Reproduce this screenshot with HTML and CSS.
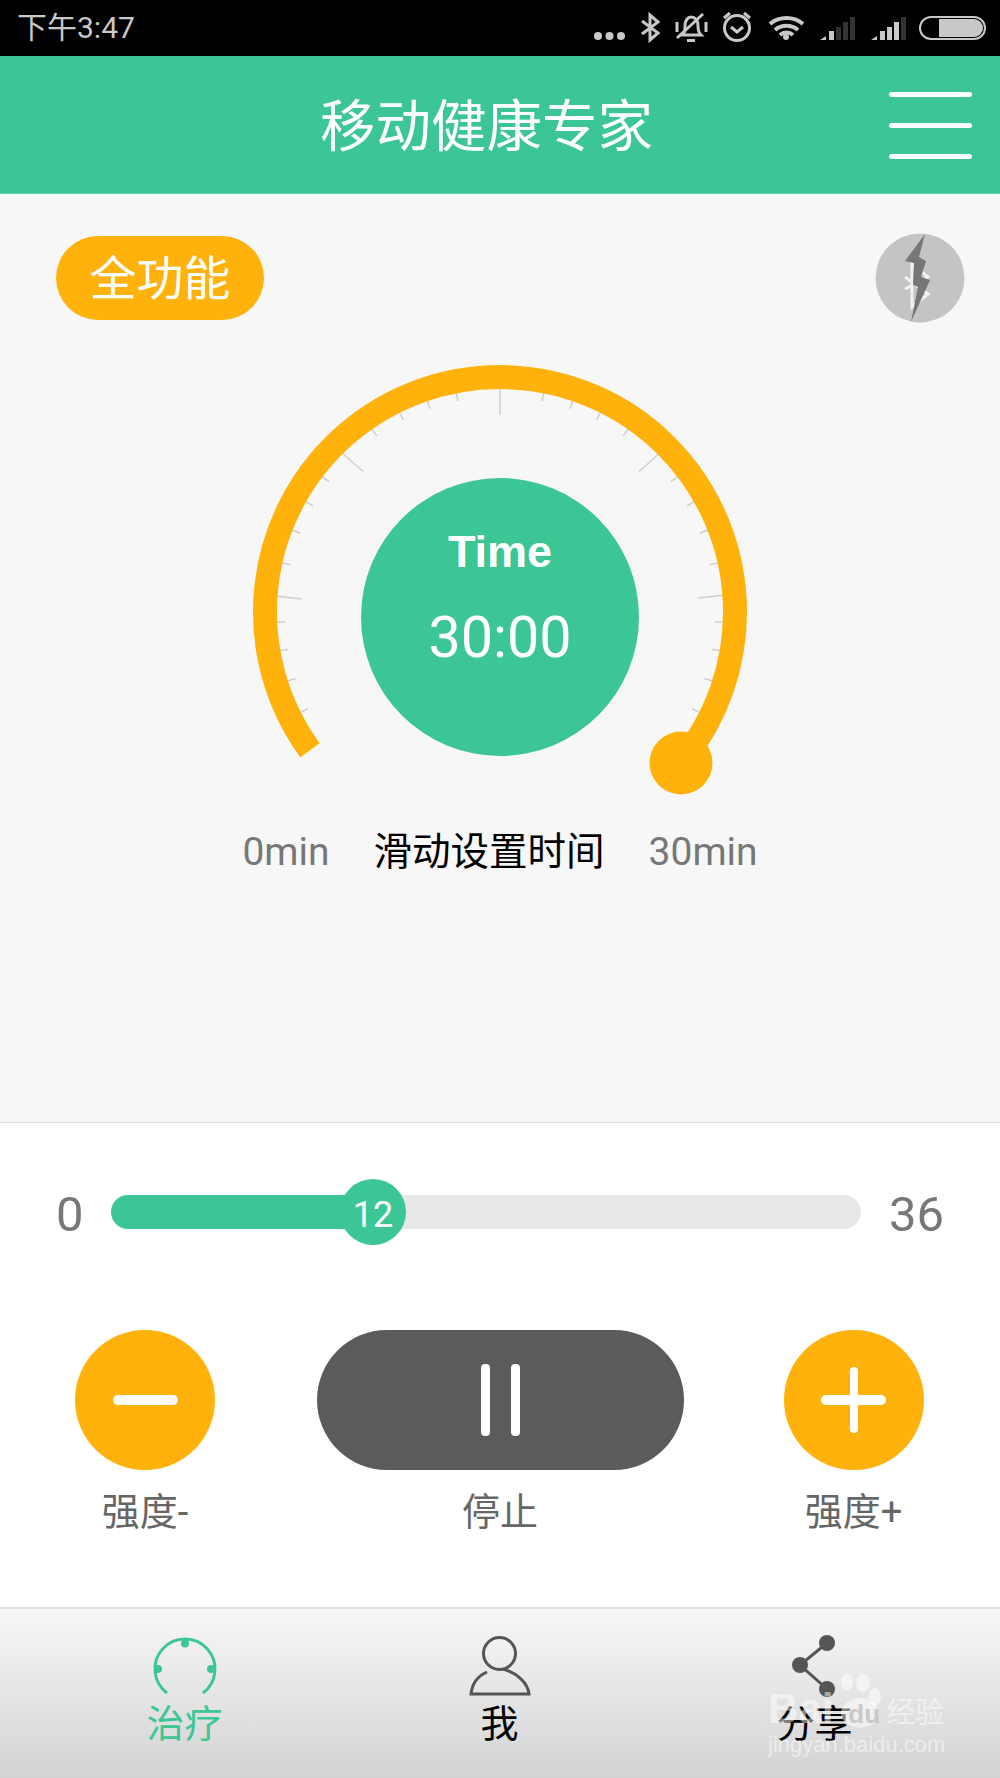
FILE: index.html
```html
<!DOCTYPE html>
<html lang="zh-CN">
<head>
    <meta charset="UTF-8">
    <meta name="viewport" content="width=device-width, initial-scale=1.0">
    <title>移动健康专家</title>
    <link rel="stylesheet" href="styles.css">
</head>
<body>
    <!-- Status bar -->
    <div class="status-bar">
        <span class="status-time">下午3:47</span>
        <svg class="status-icons" width="410" height="56" viewBox="590 0 410 56">
            <g class="si-fill">
                <circle cx="598" cy="36" r="4"/><circle cx="609.500" cy="36" r="4"/><circle cx="621" cy="36" r="4"/>
            </g>
            <polyline class="si-line" points="642,21 658,33 650,40 650,15 658,22 642,34"/>
            <g class="si-line">
                <path d="M683 35 C685 33 685 30 685 26 C685 20 688 17 691 17 C695 17 698 20 698 26 C698 30 699 33 701 35 Z"/>
                <path d="M687 40.500 H695"/>
                <path d="M677 38 L703 14"/>
                <path d="M677 22 v10 M706 22 v10"/>
            </g>
            <g class="si-line">
                <circle cx="737" cy="28" r="12.500"/>
                <path d="M731 27 L737 32 L743 27 M724 18 L730 13 M750 18 L744 13"/>
            </g>
            <g class="si-line si-wifi">
                <path d="M770 24 a26 26 0 0 1 33 0 M775 30 a18 18 0 0 1 23 0 M780 35 a10 10 0 0 1 13 0"/>
            </g>
            <circle class="si-fill" cx="786" cy="37" r="3"/>
            <g class="si-fill">
                <path d="M820 40 L826 36 V40Z"/><rect x="829" y="31" width="5" height="9"/>
                <g class="si-dim"><rect x="836" y="27" width="5" height="13"/><rect x="843" y="22" width="5" height="18"/><rect x="850" y="17" width="5" height="23"/></g>
            </g>
            <g class="si-fill">
                <path d="M871 40 L877 36 V40Z"/><rect x="880" y="31" width="5" height="9"/><rect x="887" y="27" width="5" height="13"/><rect x="894" y="22" width="5" height="18"/>
                <rect class="si-dim" x="901" y="17" width="5" height="23"/>
            </g>
            <rect class="si-line si-thin" x="920" y="17" width="65" height="22" rx="11"/>
            <path class="si-fill" d="M939 19 H974 a9 9 0 0 1 0 18 H939Z"/>
        </svg>
    </div>

    <!-- Header -->
    <header class="app-header">
        <h1>移动健康专家</h1>
        <div class="menu-icon"><span></span><span></span><span></span></div>
    </header>

    <!-- Timer area -->
    <section class="timer-area">
        <div class="top-row">
            <span class="mode-pill">全功能</span>
            <svg class="bt-badge" width="90" height="90" viewBox="0 0 90 90">
                <circle class="bt-bg" cx="45" cy="45" r="44.500"/>
                <polyline class="bt-mark" points="30,44 53,61 37,74 37,31 53,44 30,56"/>
                <polygon class="bt-bolt" points="50,1 30,28 39,30 38,52 43,54 36,89 55,47 46,44 51,28 44,24"/>
            </svg>
        </div>

        <svg class="gauge" width="540" height="450" viewBox="230 350 540 450">
            <g class="tick-minor">
                <line x1="500" y1="386" x2="500" y2="396" transform="rotate(-116.700 500 611)"/>
                <line x1="500" y1="386" x2="500" y2="396" transform="rotate(-108 500 611)"/>
                <line x1="500" y1="386" x2="500" y2="396" transform="rotate(-100 500 611)"/>
                <line x1="500" y1="386" x2="500" y2="396" transform="rotate(-92.600 500 611)"/>
                <line x1="500" y1="386" x2="500" y2="396" transform="rotate(-77.300 500 611)"/>
                <line x1="500" y1="386" x2="500" y2="396" transform="rotate(-68.500 500 611)"/>
                <line x1="500" y1="386" x2="500" y2="396" transform="rotate(-60.400 500 611)"/>
                <line x1="500" y1="386" x2="500" y2="396" transform="rotate(-52.700 500 611)"/>
                <line x1="500" y1="386" x2="500" y2="396" transform="rotate(-35 500 611)"/>
                <line x1="500" y1="386" x2="500" y2="396" transform="rotate(-26.700 500 611)"/>
                <line x1="500" y1="386" x2="500" y2="396" transform="rotate(-19 500 611)"/>
                <line x1="500" y1="386" x2="500" y2="396" transform="rotate(-11.300 500 611)"/>
                <line x1="500" y1="386" x2="500" y2="396" transform="rotate(11.300 500 611)"/>
                <line x1="500" y1="386" x2="500" y2="396" transform="rotate(19 500 611)"/>
                <line x1="500" y1="386" x2="500" y2="396" transform="rotate(26.700 500 611)"/>
                <line x1="500" y1="386" x2="500" y2="396" transform="rotate(35 500 611)"/>
                <line x1="500" y1="386" x2="500" y2="396" transform="rotate(52.700 500 611)"/>
                <line x1="500" y1="386" x2="500" y2="396" transform="rotate(60.400 500 611)"/>
                <line x1="500" y1="386" x2="500" y2="396" transform="rotate(68.500 500 611)"/>
                <line x1="500" y1="386" x2="500" y2="396" transform="rotate(77.300 500 611)"/>
                <line x1="500" y1="386" x2="500" y2="396" transform="rotate(92.600 500 611)"/>
                <line x1="500" y1="386" x2="500" y2="396" transform="rotate(100 500 611)"/>
                <line x1="500" y1="386" x2="500" y2="396" transform="rotate(108 500 611)"/>
                <line x1="500" y1="386" x2="500" y2="396" transform="rotate(116.700 500 611)"/>
            </g>
            <g class="tick-major">
                <line x1="274" y1="595" x2="302" y2="598"/>
                <line x1="340" y1="450" x2="363" y2="470.500"/>
                <line x1="500" y1="386" x2="500" y2="414"/>
                <line x1="662" y1="450" x2="639" y2="470.500"/>
                <line x1="726" y1="594" x2="698" y2="597"/>
            </g>
            <path class="gauge-arc" d="M310 749.300 A235 235 0 1 1 680.500 761.500"/>
            <circle class="gauge-knob" cx="681" cy="762" r="31.500"/>
            <circle class="gauge-face" cx="500" cy="616" r="139"/>
            <text class="gauge-title" x="500" y="566">Time</text>
            <text class="gauge-value" x="500" y="656">30:00</text>
        </svg>

        <div class="gauge-labels">
            <span class="range-label">0min</span>
            <span class="gauge-hint">滑动设置时间</span>
            <span class="range-label">30min</span>
        </div>
    </section>

    <!-- Intensity controls -->
    <section class="control-area">
        <div class="slider-row">
            <span class="slider-min">0</span>
            <div class="slider-track">
                <div class="slider-fill"></div>
                <div class="slider-thumb">12</div>
            </div>
            <span class="slider-max">36</span>
        </div>

        <div class="button-row">
            <div class="control">
                <button class="round-btn"><span class="bar-h"></span></button>
                <span class="control-label">强度-</span>
            </div>
            <div class="control">
                <button class="pause-btn"><span></span><span></span></button>
                <span class="control-label">停止</span>
            </div>
            <div class="control">
                <button class="round-btn"><span class="bar-h"></span><span class="bar-v"></span></button>
                <span class="control-label">强度+</span>
            </div>
        </div>
    </section>

    <!-- Bottom tabs -->
    <nav class="tab-bar">
        <div class="tab tab-active">
            <svg width="70" height="62" viewBox="0 0 70 62">
                <path class="tab-arc" d="M17 56 A30 30 0 1 1 53 56"/>
                <circle class="tab-dot" cx="35" cy="6.500" r="4"/>
                <circle class="tab-dot" cx="8" cy="32" r="4"/>
                <circle class="tab-dot" cx="61" cy="32" r="4"/>
            </svg>
            <span>治疗</span>
        </div>
        <div class="tab">
            <svg width="70" height="62" viewBox="0 0 70 62">
                <circle class="tab-person" cx="34.500" cy="16.500" r="16"/>
                <path class="tab-person" d="M22 35 C13 39 7 47 6 57 H64 C63 46 52 36 38 32"/>
            </svg>
            <span>我</span>
        </div>
        <div class="tab">
            <svg width="70" height="62" viewBox="0 0 70 62">
                <path class="tab-share" d="M47 6 L20 28 L47 52"/>
                <circle class="tab-node" cx="47" cy="6" r="8"/>
                <circle class="tab-node" cx="20" cy="28" r="8"/>
                <circle class="tab-node" cx="47" cy="52" r="8"/>
            </svg>
            <span>分享</span>
        </div>

        <!-- Watermark sits over the share tab -->
        <div class="watermark">
            <svg class="wm-paw" width="60" height="70" viewBox="0 0 60 70">
                <ellipse cx="11" cy="15" rx="6" ry="9"/>
                <ellipse cx="27" cy="16" rx="7" ry="9"/>
                <ellipse cx="39" cy="30" rx="6" ry="9"/>
                <ellipse cx="24" cy="46" rx="19" ry="15"/>
            </svg>
            <div class="wm-brand">Bai<span class="wm-du">du</span><span class="wm-cn">经验</span></div>
            <div class="wm-url">jingyan.baidu.com</div>
        </div>
    </nav>
</body>
</html>
```

FILE: styles.css
```css
* {
    box-sizing: border-box;
}
body {
    margin: 0;
    width: 1000px;
    height: 1778px;
    overflow: hidden;
    background: #fff;
    font-family: Roboto, "Noto Sans CJK SC", sans-serif;
}

/* status bar */
.status-bar {
    height: 56px;
    background: #000;
    display: flex;
    justify-content: space-between;
    padding-left: 17px;
}
.status-time {
    color: #c8c8c8;
    font-size: 30px;
    line-height: 56px;
}
.si-fill {
    fill: #c8c8c8;
}
.si-dim {
    fill: #333;
}
.si-line {
    fill: none;
    stroke: #c8c8c8;
    stroke-width: 3;
}
.si-wifi {
    stroke-width: 4;
}
.si-thin {
    stroke-width: 2;
}

/* header */
.app-header {
    height: 138px;
    background: #3dc695;
    border-bottom: 1px solid #58cfa5;
    display: flex;
    align-items: center;
    justify-content: space-between;
    padding: 0 28px 0 320px;
}
.app-header h1 {
    margin: 0 0 6px;
    color: #fff;
    font-size: 55.5px;
    font-weight: 400;
}
.menu-icon {
    width: 83px;
    margin-top: 2px;
    display: flex;
    flex-direction: column;
    gap: 26px;
}
.menu-icon span {
    display: block;
    height: 5px;
    background: #fff;
    border-radius: 3px;
}

/* timer */
.timer-area {
    height: 929px;
    background: #f7f7f7;
    border-bottom: 1px solid #ddd;
    padding-top: 39px;
}
.top-row {
    display: flex;
    align-items: center;
    justify-content: space-between;
    padding: 0 35px 0 56px;
}
.mode-pill {
    width: 208px;
    height: 84px;
    border-radius: 42px;
    background: #ffb10c;
    color: #fff;
    font-size: 47px;
    line-height: 86px;
    text-align: center;
}
.bt-bg {
    fill: #c4c4c4;
}
.bt-mark {
    fill: none;
    stroke: #f2f2f2;
    stroke-width: 3;
}
.bt-bolt {
    fill: #777;
}
.gauge {
    display: block;
    margin: 28px auto 0;
}
.tick-minor line,
.tick-major line {
    stroke: #cfcfcf;
    stroke-width: 1.5;
}
.gauge-arc {
    fill: none;
    stroke: #ffb10c;
    stroke-width: 24;
}
.gauge-knob {
    fill: #ffb10c;
}
.gauge-face {
    fill: #3dc695;
}
.gauge-title {
    fill: #fff;
    font-family: "Liberation Sans", sans-serif;
    font-size: 45px;
    font-weight: 700;
    text-anchor: middle;
}
.gauge-value {
    fill: #fff;
    font-size: 57.5px;
    text-anchor: middle;
}
.gauge-labels {
    display: flex;
    justify-content: center;
    align-items: center;
    gap: 44px;
    margin-top: 23px;
    line-height: 56px;
}
.range-label {
    color: #777;
    font-size: 39px;
}
.gauge-hint {
    color: #000;
    font-size: 38.5px;
}

/* intensity controls */
.control-area {
    height: 484px;
    padding-top: 56px;
}
.slider-row {
    display: flex;
    align-items: center;
    height: 66px;
    padding: 0 56px;
    color: #777;
    font-size: 49px;
}
.slider-min {
    width: 55px;
    padding-top: 4px;
}
.slider-max {
    width: 83px;
    padding-top: 4px;
    text-align: right;
}
.slider-track {
    position: relative;
    flex: 1;
    height: 34px;
    border-radius: 17px;
    background: #e8e8e8;
}
.slider-fill {
    width: 35%;
    height: 100%;
    border-radius: 17px 0 0 17px;
    background: #3dc695;
}
.slider-thumb {
    position: absolute;
    left: 229px;
    top: -16px;
    width: 66px;
    height: 66px;
    border-radius: 50%;
    background: #3dc695;
    color: #fff;
    font-size: 36px;
    line-height: 72px;
    text-align: center;
}
.button-row {
    display: grid;
    grid-template-columns: 290px 420px 287px;
    margin-top: 85px;
}
.control {
    display: flex;
    flex-direction: column;
    align-items: center;
}
.round-btn,
.pause-btn {
    position: relative;
    display: flex;
    align-items: center;
    justify-content: center;
    height: 140px;
    padding: 0;
    border: none;
}
.round-btn {
    width: 140px;
    border-radius: 50%;
    background: #ffb10c;
}
.bar-h {
    width: 65px;
    height: 10px;
    border-radius: 5px;
    background: #fff;
}
.bar-v {
    position: absolute;
    left: 66px;
    top: 37px;
    width: 8px;
    height: 66px;
    border-radius: 4px;
    background: #fff;
}
.pause-btn {
    width: 367px;
    gap: 21px;
    border-radius: 70px;
    background: #5b5b5b;
}
.pause-btn span {
    width: 9px;
    height: 72px;
    border-radius: 4px;
    background: #fff;
}
.control-label {
    margin-top: 17px;
    color: #666;
    font-size: 38px;
    line-height: 50px;
}

/* bottom tabs */
.tab-bar {
    position: relative;
    height: 171px;
    border-top: 2px solid #e2e2e2;
    background: linear-gradient(#f7f7f7, #d3d3d3);
    display: grid;
    grid-template-columns: repeat(3, 315px);
    padding: 28px 0 0 27px;
}
.tab {
    display: flex;
    flex-direction: column;
    align-items: center;
    color: #000;
    font-size: 38px;
    line-height: 50px;
}
.tab svg {
    display: block;
    overflow: visible;
}
.tab-active {
    color: #3dc695;
}
.tab-arc {
    fill: none;
    stroke: #3dc695;
    stroke-width: 3;
}
.tab-dot {
    fill: #3dc695;
}
.tab-person {
    fill: none;
    stroke: #555;
    stroke-width: 3;
}
.tab-share {
    fill: none;
    stroke: #555;
    stroke-width: 3;
}
.tab-node {
    fill: #555;
}

/* watermark */
.watermark {
    position: absolute;
    left: 768px;
    top: 64px;
    width: 190px;
    color: rgba(255, 255, 255, 0.5);
}
.wm-paw {
    position: absolute;
    left: 68px;
    top: -6px;
    fill: rgba(255, 255, 255, 0.5);
}
.wm-brand {
    position: relative;
    margin-top: 16px;
    font-family: "Liberation Sans", sans-serif;
    font-size: 42px;
    font-weight: 700;
    line-height: 40px;
    white-space: nowrap;
}
.wm-du {
    margin-left: 15px;
    color: rgba(190, 190, 190, 0.8);
    font-size: 26px;
}
.wm-cn {
    margin-left: 6px;
    font-family: "Noto Sans CJK SC", sans-serif;
    font-size: 29px;
    font-weight: 400;
}
.wm-url {
    margin-top: -2px;
    font-family: "Liberation Sans", sans-serif;
    font-size: 22px;
    line-height: 26px;
}
```
